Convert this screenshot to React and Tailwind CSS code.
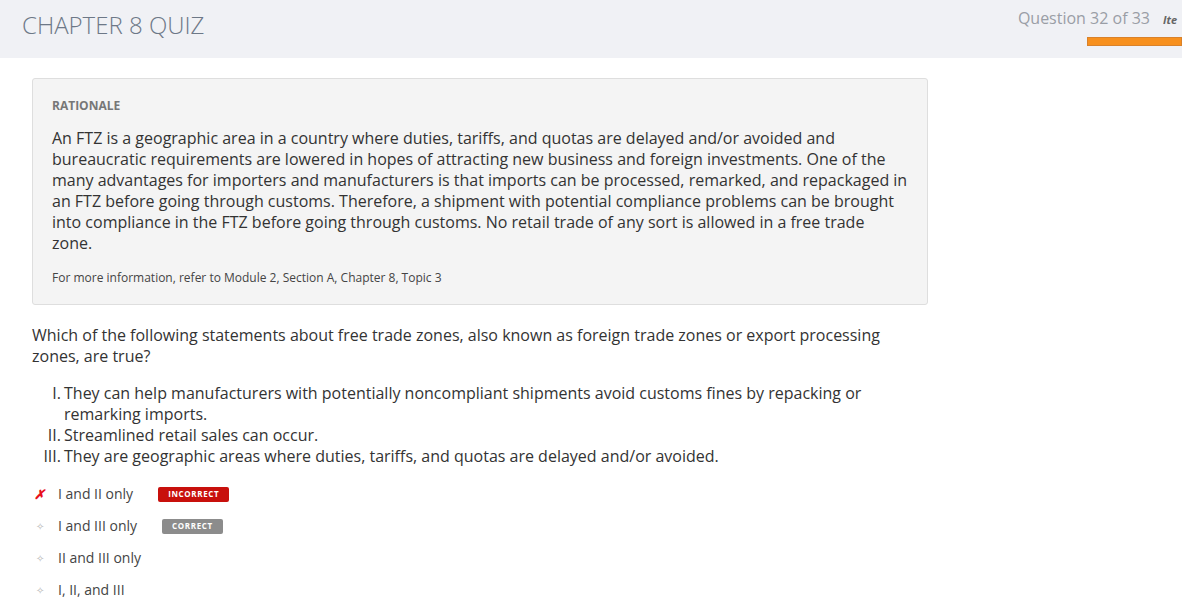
import React from 'react';

const options = [
    { text: 'I and II only', mark: 'wrong', badge: 'INCORRECT' },
    { text: 'I and III only', mark: 'dot', badge: 'CORRECT' },
    { text: 'II and III only', mark: 'dot' },
    { text: 'I, II, and III', mark: 'dot' },
];

const statements = [
    ['I.', 'They can help manufacturers with potentially noncompliant shipments avoid customs fines by repacking or remarking imports.'],
    ['II.', 'Streamlined retail sales can occur.'],
    ['III.', 'They are geographic areas where duties, tariffs, and quotas are delayed and/or avoided.'],
];

function Badge({ label }) {
    const color = label === 'INCORRECT' ? 'bg-[#c8100c]' : 'bg-[#8c8c8c]';
    return (
        <span className={`${color} ml-[25px] inline-flex h-[15px] items-center rounded-[2px] px-[10px] text-[8px] font-bold tracking-[0.08em] text-white`}>
            {label}
        </span>
    );
}

export default function App() {
    return (
        <div className="min-h-[616px] w-[1182px] overflow-hidden bg-white font-['Open_Sans',sans-serif]">
            <header className="flex h-[58px] bg-[#f0f1f5]">
                <h1 className="pl-[22px] pt-[9px] text-[24px] font-light leading-[32px] text-[#6d7887]">CHAPTER 8 QUIZ</h1>
                <div className="ml-auto flex flex-col items-end pt-[6px]">
                    <div className="flex items-baseline whitespace-nowrap">
                        <span className="text-[16px] leading-[24px] text-[#9a9ea6]">Question 32 of 33</span>
                        <span className="ml-[13px] w-[19px] overflow-hidden text-[11px] font-bold italic text-[#666]">Ite</span>
                    </div>
                    <div className="mt-[7px] h-[9px] w-[95px] border border-[#d9822b] bg-[#f7901e]" />
                </div>
            </header>

            <main className="pl-[32px] pt-[20px]">
                <section className="w-[896px] rounded-[3px] border border-[#dedede] bg-[#f4f4f4] px-[19px] pb-[16px] pt-[17px]">
                    <h2 className="text-[12px] font-bold leading-[20px] text-[#777]">RATIONALE</h2>
                    <p className="mt-[12px] text-[16px] leading-[21px] text-[#333]">
                        An FTZ is a geographic area in a country where duties, tariffs, and quotas are delayed and/or avoided and bureaucratic requirements are lowered in hopes of attracting new business and foreign investments. One of the many advantages for importers and manufacturers is that imports can be processed, remarked, and repackaged in an FTZ before going through customs. Therefore, a shipment with potential compliance problems can be brought into compliance in the FTZ before going through customs. No retail trade of any sort is allowed in a free trade zone.
                    </p>
                    <p className="mt-[14px] text-[12px] leading-[20px] text-[#444]">
                        For more information, refer to Module 2, Section A, Chapter 8, Topic 3
                    </p>
                </section>

                <p className="mt-[20px] w-[880px] text-[16px] leading-[21px] text-[#333]">
                    Which of the following statements about free trade zones, also known as foreign trade zones or export processing zones, are true?
                </p>

                <ol className="mt-[16px] w-[860px] text-[16px] leading-[21px] text-[#333]">
                    {statements.map(([num, text]) => (
                        <li key={num} className="flex">
                            <span className="w-[32px] shrink-0 pr-[3px] text-right">{num}</span>
                            <span>{text}</span>
                        </li>
                    ))}
                </ol>

                <ul className="mt-[11px]">
                    {options.map((o) => (
                        <li key={o.text} className="flex h-[32px] items-center">
                            <span className="flex w-[26px] justify-start pl-[2px]">
                                {o.mark === 'wrong' ? (
                                    <span className="text-[13px] font-bold italic leading-none text-[#e8101a]">✗</span>
                                ) : (
                                    <span className="ml-[2px] text-[10px] leading-none text-[#b8b8b8]">✧</span>
                                )}
                            </span>
                            <span className="text-[14px] leading-[20px] text-[#444]">{o.text}</span>
                            {o.badge && <Badge label={o.badge} />}
                        </li>
                    ))}
                </ul>
            </main>
        </div>
    );
}
